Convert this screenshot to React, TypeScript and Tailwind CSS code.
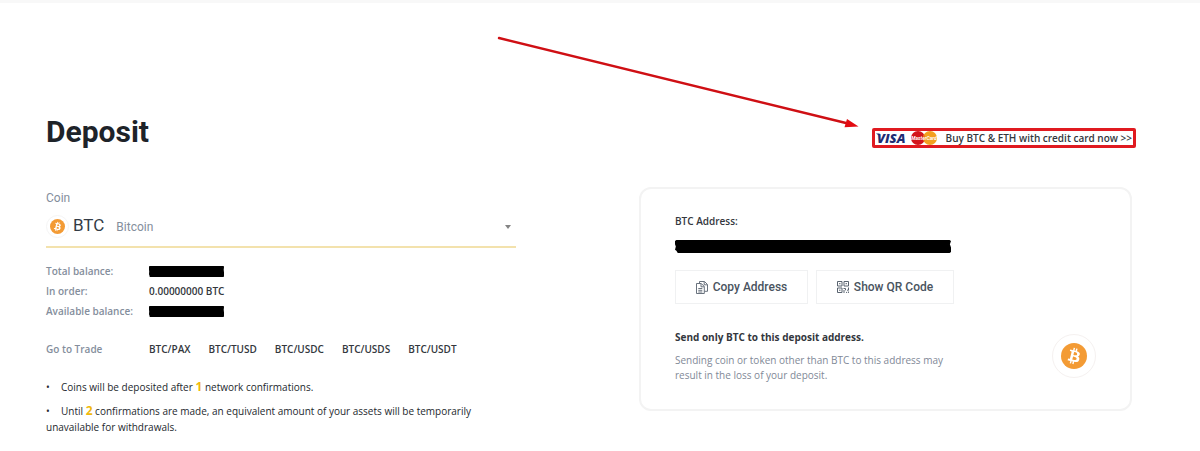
import { useState } from 'react';

type Coin = { symbol: string; name: string };

const coins: Coin[] = [{ symbol: 'BTC', name: 'Bitcoin' }];

const pairs = ['BTC/PAX', 'BTC/TUSD', 'BTC/USDC', 'BTC/USDS', 'BTC/USDT'];

function BitcoinIcon({ className }: { className: string }) {
  return (
    <svg viewBox="0 0 32 32" className={className} aria-hidden="true">
      <circle cx="16" cy="16" r="16" fill="#f39b35" />
      <path
        fill="#fff"
        d="M23.2 14c.3-2.1-1.3-3.3-3.5-4l.7-2.9-1.7-.4-.7 2.8-1.4-.3.7-2.9-1.7-.4-.7 2.9-1.1-.3-2.4-.6-.5 1.9s1.3.3 1.3.3c.7.2.8.6.8 1l-2 7.9c-.1.2-.3.5-.8.4 0 0-1.3-.3-1.3-.3l-.9 2 3.4.9-.7 2.9 1.7.4.7-2.9 1.4.4-.7 2.8 1.7.5.7-2.9c3 .6 5.2.3 6.1-2.4.8-2.1 0-3.4-1.6-4.2 1.1-.3 2-1 2.2-2.6zm-4 5.6c-.5 2.1-4.1 1-5.3.7l1-3.8c1.1.3 4.9.9 4.3 3.1zm.6-5.6c-.5 1.9-3.5.9-4.5.7l.8-3.5c1 .3 4.2.7 3.7 2.8z"
      />
    </svg>
  );
}

function CardLogos() {
  return (
    <svg width="62" height="14" viewBox="0 0 62 14" className="overflow-visible" aria-hidden="true">
      <text x="1" y="12" fill="#1f2c73" fontFamily="Open Sans, sans-serif" fontSize="13" fontWeight="800" fontStyle="italic">
        VISA
      </text>
      <path d="M0 2.5h3.5l1 3z" fill="#1f2c73" />
      <circle cx="42" cy="7" r="7" fill="#d3151c" />
      <circle cx="54" cy="7" r="7" fill="#f3a01f" />
      <path d="M48 3.3a7 7 0 0 1 0 7.4a7 7 0 0 1 0-7.4z" fill="#e5701d" />
      <text x="48" y="9" textAnchor="middle" fill="#fff" fontFamily="Roboto, sans-serif" fontSize="5" fontWeight="700" fontStyle="italic">
        MasterCard
      </text>
    </svg>
  );
}

function CopyIcon() {
  return (
    <svg width="12" height="13" viewBox="0 0 12 13" fill="none" stroke="#59636f" strokeWidth="0.9" aria-hidden="true">
      <path d="M3.5 2.5V.5h5l3 3v6.8h-3" />
      <path d="M8.2.8v3h3" />
      <path d="M.5 2.5h4.8l3 3v7H.5z" />
      <path d="M5 2.8v3h3M2.3 7.5h4M2.3 9.3h4M2.3 11h4" />
    </svg>
  );
}

function QrIcon() {
  return (
    <svg width="12" height="12" viewBox="0 0 12 12" fill="none" stroke="#59636f" strokeWidth="1" aria-hidden="true">
      <path d="M.5.5h4.5v4.5H.5zM7 .5h4.5v4.5H7zM.5 7h4.5v4.5H.5z" />
      <path d="M2 2.7h1.5M8.5 2.7H10M2 9.2h1.5M6.5 7.5h2v1.8M11.5 6.5v2.7H10M7 9v3M9 11.4h1M11.4 10.5V12" />
    </svg>
  );
}

function Redacted({ className }: { className: string }) {
  return (
    <svg viewBox="0 0 100 12" preserveAspectRatio="none" className={className} role="img" aria-label="Hidden value">
      <path d="M.5 0H99.5L100 1L99.6 4L100 7V11L99.5 12H1L.5 10L0 9L.3 6L0 4V1z" fill="#000" />
    </svg>
  );
}

function Arrow() {
  return (
    <svg width="364" height="94" viewBox="0 0 364 94" className="absolute right-full bottom-full mr-[13px]" aria-hidden="true">
      <path d="M4 4L353 89.500" stroke="#cf0f14" strokeWidth="2.4" strokeLinecap="round" />
      <path d="M363.5 92.5L352 85L349.5 93.2z" fill="#e30b12" />
    </svg>
  );
}

function CoinSelect() {
  const [symbol, setSymbol] = useState('BTC');

  return (
    <div>
      <label htmlFor="coin" className="block text-xs leading-4 text-[#848e9c]">
        Coin
      </label>
      <div className="flex h-[42px] items-center border-b-2 border-[#f3e2ad]">
        <span className="rounded-full border border-[#f5f5f5] p-[3px]">
          <BitcoinIcon className="size-[15px]" />
        </span>
        <span className="ml-1 text-[17px] text-[#333b45]">{symbol}</span>
        <div className="relative ml-3 flex-1">
          <select
            id="coin"
            value={symbol}
            onChange={(e) => setSymbol(e.target.value)}
            className="mt-0.5 block w-full appearance-none bg-transparent text-xs leading-4 text-[#848e9c] outline-none"
          >
            {coins.map((c) => (
              <option key={c.symbol} value={c.symbol}>
                {c.name}
              </option>
            ))}
          </select>
          <svg width="6" height="4" viewBox="0 0 6 4" className="pointer-events-none absolute top-2 right-[5px]" aria-hidden="true">
            <path d="M0 0h6L3 4z" fill="#848484" />
          </svg>
        </div>
      </div>
    </div>
  );
}

function Balances() {
  return (
    <dl className="mt-[13px] grid grid-cols-[103px_1fr] items-center leading-5 font-semibold text-[#848e9c]">
      <dt>Total balance:</dt>
      <dd>
        <Redacted className="h-[11px] w-[75px]" />
      </dd>
      <dt>In order:</dt>
      <dd className="text-[#33373d]">0.00000000 BTC</dd>
      <dt>Available balance:</dt>
      <dd>
        <Redacted className="h-[11px] w-[75px]" />
      </dd>
    </dl>
  );
}

function AddressCard() {
  const button =
    "flex h-[34px] items-center justify-center gap-[5px] border border-[#f0f1f2] font-['Roboto',sans-serif] text-xs font-medium text-[#4a5460]";

  return (
    <section className="rounded-xl border-2 border-[#f3f3f3] px-[34px] pt-6 pb-[26px]">
      <h2 className="leading-4 font-semibold text-[#33373d]">BTC Address:</h2>
      <Redacted className="mt-[11px] h-[13px] w-[276px]" />
      <div className="mt-[17px] flex gap-2">
        <button type="button" className={`${button} w-[133px]`}>
          <CopyIcon />
          Copy Address
        </button>
        <button type="button" className={`${button} w-[138px]`}>
          <QrIcon />
          Show QR Code
        </button>
      </div>
      <div className="mt-[25px] flex items-center justify-between">
        <div>
          <p className="leading-4 font-bold text-[#33373d]">Send only BTC to this deposit address.</p>
          <p className="mt-2 max-w-[290px] leading-[15px] font-medium text-[#7f8997]">
            Sending coin or token other than BTC to this address may result in the loss of your deposit.
          </p>
        </div>
        <span className="rounded-full border border-[#f5f1f0] p-2">
          <BitcoinIcon className="size-[26px]" />
        </span>
      </div>
    </section>
  );
}

export default function App() {
  return (
    <main className="border-t-3 border-[#f8f8f8] bg-white pr-[68px] pb-4 pl-[46px] font-['Roboto','Liberation_Sans',sans-serif]">
      <header className="flex items-center justify-between pt-[109px]">
        <h1 className="text-3xl leading-10 font-bold text-[#1e2329]">Deposit</h1>
        <div className="relative -mr-1 mt-3">
          <Arrow />
          <a
            href="#credit-card"
            className="flex h-5 items-center gap-2 rounded-xs border-3 border-[#e01a20] px-px font-['Open_Sans',sans-serif] text-[10px] font-semibold text-[#33373d]"
          >
            <CardLogos />
            Buy BTC &amp; ETH with credit card now &gt;&gt;
          </a>
        </div>
      </header>

      <div className="mt-[35px] grid grid-cols-[470fr_493fr] items-start gap-[123px] font-['Open_Sans',sans-serif] text-[10px]">
        <section className="pt-[3px]">
          <div className="font-['Roboto',sans-serif]">
            <CoinSelect />
          </div>
          <Balances />
          <div className="mt-5 flex leading-4 font-semibold">
            <span className="w-[103px] text-[#848e9c]">Go to Trade</span>
            <nav className="flex gap-[18px] text-[#33373d]">
              {pairs.map((pair) => (
                <a key={pair} href={`#${pair}`}>
                  {pair}
                </a>
              ))}
            </nav>
          </div>
          <ul className="mt-[22px] space-y-2 leading-4 font-medium text-[#24282d]">
            <li>
              <span className="inline-block w-[15px]">•</span>
              Coins will be deposited after <b className="text-xs leading-none text-[#f0b90b]">1</b> network confirmations.
            </li>
            <li>
              <span className="inline-block w-[15px]">•</span>
              Until <b className="text-xs leading-none text-[#f0b90b]">2</b> confirmations are made, an equivalent amount of your
              assets will be temporarily unavailable for withdrawals.
            </li>
          </ul>
        </section>

        <AddressCard />
      </div>
    </main>
  );
}
